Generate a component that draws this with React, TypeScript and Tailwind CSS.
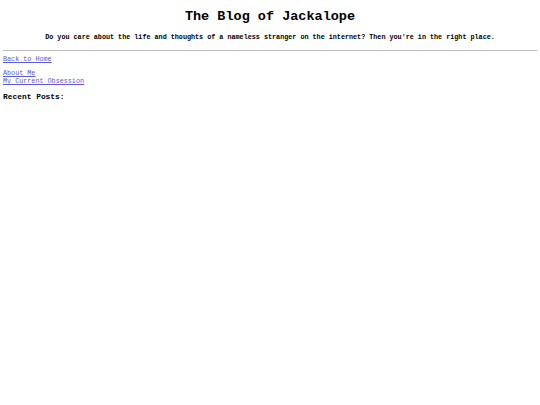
export default function App() {
  return (
    <div className="min-h-[405px] bg-white px-[3px] pt-[9px] text-black" style={{ fontFamily: '"Liberation Mono", "Courier New", monospace' }}>
      <h1 className="text-center text-[13.5px] font-bold leading-[16px]">The Blog of Jackalope</h1>
      <p className="mt-[8px] text-center text-[6.75px] font-bold leading-[8px]">
        Do you care about the life and thoughts of a nameless stranger on the internet? Then you're in the right place.
      </p>
      <hr className="mt-[9px] border-t border-[#bdbdbd]" />
      <div className="mt-[4px] text-[6.75px] leading-[8px]">
        <a href="#" className="text-[#5a5ad8] underline">Back to Home</a>
      </div>
      <div className="mt-[6px] flex flex-col text-[6.75px] leading-[8px]">
        <a href="#" className="self-start text-[#5a5ad8] underline">About Me</a>
        <a href="#" className="self-start text-[#5a5ad8] underline">My Current Obsession</a>
      </div>
      <h3 className="mt-[7px] text-[7.9px] font-bold leading-[10px]">Recent Posts:</h3>
    </div>
  )
}
